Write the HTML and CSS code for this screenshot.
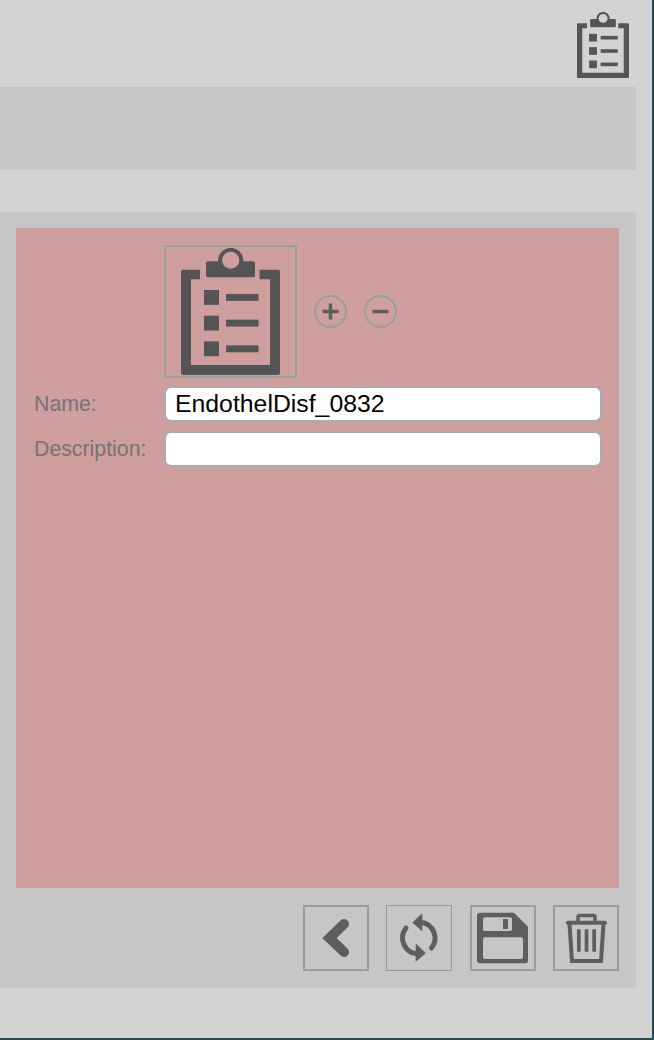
FILE: index.html
```html
<!DOCTYPE html>
<html lang="en">
<head>
  <meta charset="UTF-8" />
  <meta name="viewport" content="width=device-width, initial-scale=1" />
  <title>Checklist</title>
  <link rel="stylesheet" href="styles.css">
</head>
<body>
  <svg class="defs" width="0" height="0" aria-hidden="true">
    <symbol id="checklist" viewBox="31 11.5 99 128.5" preserveAspectRatio="none">
      <path d="M50 33.5H33a2 2 0 0 0-2 2V138a2 2 0 0 0 2 2h95a2 2 0 0 0 2-2V35.5a2 2 0 0 0-2-2h-18.500v9.500H120V130H41V43h9z"/>
      <rect x="56" y="25" width="49" height="16" rx="2"/>
      <circle cx="80.700" cy="24" r="10.600" fill="#cf9e9e" stroke="#555" stroke-width="4"/>
      <rect x="54" y="54" width="15" height="15"/>
      <rect x="54" y="80" width="15" height="15"/>
      <rect x="54" y="106" width="15" height="15"/>
      <rect x="76" y="58" width="32.500" height="7"/>
      <rect x="76" y="84" width="32.500" height="7"/>
      <rect x="76" y="110" width="32.500" height="7"/>
    </symbol>
    <symbol id="checklist-top" viewBox="31 11.5 99 128.5" preserveAspectRatio="none">
      <path d="M50 33.5H33a2 2 0 0 0-2 2V138a2 2 0 0 0 2 2h95a2 2 0 0 0 2-2V35.5a2 2 0 0 0-2-2h-18.500v9.500H120V130H41V43h9z"/>
      <rect x="56" y="25" width="49" height="16" rx="2"/>
      <circle cx="80.700" cy="24" r="10.600" fill="#d3d3d3" stroke="#555" stroke-width="4"/>
      <rect x="54" y="54" width="15" height="15"/>
      <rect x="54" y="80" width="15" height="15"/>
      <rect x="54" y="106" width="15" height="15"/>
      <rect x="76" y="58" width="32.500" height="7"/>
      <rect x="76" y="84" width="32.500" height="7"/>
      <rect x="76" y="110" width="32.500" height="7"/>
    </symbol>
  </svg>

  <div class="screen">
    <header class="top-bar">
      <svg class="top-icon"><use href="#checklist-top"/></svg>
    </header>

    <div class="band"></div>

    <section class="panel">
      <div class="form-area">
        <div class="icon-row">
          <div class="icon-box">
            <svg class="big-icon"><use href="#checklist"/></svg>
          </div>
          <button class="round-btn" type="button" aria-label="Add">
            <svg viewBox="0 0 33 33"><path d="M8.500 16.500h16M16.500 8.500v16"/></svg>
          </button>
          <button class="round-btn" type="button" aria-label="Remove">
            <svg viewBox="0 0 33 33"><path d="M8.500 16.500h16"/></svg>
          </button>
        </div>

        <div class="form-row">
          <label for="name">Name:</label>
          <input type="text" id="name" value="EndothelDisf_0832" />
        </div>
        <div class="form-row">
          <label for="description">Description:</label>
          <input type="text" id="description" value="" />
        </div>
      </div>

      <div class="toolbar">
        <button class="tool" type="button" aria-label="Back">
          <svg viewBox="0 0 66 66"><path class="line" d="M41 19 26.500 33 41 47" stroke-width="10"/></svg>
        </button>
        <button class="tool thin" type="button" aria-label="Refresh">
          <svg viewBox="0 0 66 66">
            <path class="line" d="M35 17.200A16 16 0 0 1 45.500 43" stroke-width="5"/>
            <path class="line" d="M31 48.800A16 16 0 0 1 20 23" stroke-width="5"/>
            <path d="M26.300 17.500 36.300 8.300V26.600z"/>
            <path d="M39.700 48.300 29.700 38.300V56.700z"/>
          </svg>
        </button>
        <button class="tool" type="button" aria-label="Save">
          <svg viewBox="0 0 66 66">
            <path fill-rule="evenodd" d="M10 7.700H44L58 21.700V55.300a3 3 0 0 1-3 3H10a3 3 0 0 1-3-3V10.700a3 3 0 0 1 3-3zM15 12.300a2 2 0 0 0-2 2V24a2 2 0 0 0 2 2H40a2 2 0 0 0 2-2V14.300a2 2 0 0 0-2-2zM15 32.300a2 2 0 0 0-2 2V52a2 2 0 0 0 2 2H51a2 2 0 0 0 2-2V34.300a2 2 0 0 0-2-2z"/>
            <rect x="33" y="14" width="5" height="10"/>
          </svg>
        </button>
        <button class="tool" type="button" aria-label="Delete">
          <svg viewBox="0 0 66 66">
            <path class="line" d="M15 17.700H52" stroke-width="4"/>
            <path class="line" d="M25 16.500V12a1.500 1.500 0 0 1 1.500-1.500h14A1.500 1.500 0 0 1 42 12v4.500" stroke-width="3.500"/>
            <path class="line" d="M16.500 19 19 56H48L50.500 19" stroke-width="4"/>
            <rect x="24" y="24.300" width="3.700" height="22.400"/>
            <rect x="31.700" y="24.300" width="3.700" height="22.400"/>
            <rect x="39.300" y="24.300" width="3.700" height="22.400"/>
          </svg>
        </button>
      </div>
    </section>
  </div>
</body>
</html>
```

FILE: styles.css
```css
* {
  box-sizing: border-box;
}

html,
body {
  height: 100%;
}

body {
  margin: 0;
  background: #1f4e57;
  font-family: "Liberation Sans", Arial, sans-serif;
  overflow: hidden;
}

.defs {
  display: block;
  height: 0;
}

.screen {
  width: 652px;
  height: 1038px;
  background: #d3d3d3;
}

.top-bar {
  height: 87px;
  display: flex;
  justify-content: flex-end;
  align-items: flex-start;
  padding: 12px 23px 0 0;
}

.top-icon {
  display: block;
  width: 52px;
  height: 66px;
  fill: #555;
  filter: blur(0.4px);
}

.band {
  width: 636px;
  height: 83px;
  background: #c6c6c6;
}

.panel {
  width: 636px;
  height: 776px;
  margin-top: 42px;
  padding: 16px 17px 0 16px;
  background: #c6c6c6;
}

.form-area {
  height: 660px;
  padding: 17px 17px 0 18px;
  background: #cf9e9e;
}

.icon-row {
  display: flex;
  align-items: center;
  gap: 17px;
  padding-left: 130px;
  margin-bottom: 8px;
}

.icon-box {
  width: 133px;
  height: 133px;
  border: 2px solid #9c9e9e;
  display: flex;
  padding: 1px 0 0 15px;
}

.big-icon {
  display: block;
  width: 99px;
  height: 127px;
  fill: #555;
  filter: blur(0.4px);
}

.round-btn {
  width: 33px;
  height: 33px;
  padding: 0;
  border: 2px solid #9a9e9e;
  border-radius: 50%;
  background: transparent;
}

.round-btn svg {
  display: block;
  width: 33px;
  height: 33px;
  margin: -2px;
  fill: none;
  stroke: #5e5e5e;
  stroke-width: 3.5;
  filter: blur(0.4px);
}

.form-row {
  display: flex;
  align-items: center;
  margin-bottom: 9px;
}

.form-row label {
  width: 130px;
  font-size: 21.300px;
  color: #757575;
}

.form-row input {
  width: 438px;
  height: 36px;
  padding: 0 9px;
  border: 2px solid #aaa;
  border-radius: 7px;
  background: #fff;
  font-family: inherit;
  font-size: 24.800px;
  color: #000;
  outline: none;
}

.toolbar {
  display: flex;
  justify-content: flex-end;
  gap: 17.400px;
  padding-top: 17px;
}

.tool {
  width: 66px;
  height: 66px;
  padding: 0;
  border: 2px solid #9c9c9c;
  background: transparent;
}

.tool.thin {
  border-width: 1px;
}

.tool svg {
  display: block;
  width: 66px;
  height: 66px;
  margin: -2px;
  fill: #5e5e5e;
  filter: blur(0.4px);
}

.tool.thin svg {
  margin: -1px;
}

.tool .line {
  fill: none;
  stroke: #5e5e5e;
  stroke-linecap: round;
}
```
